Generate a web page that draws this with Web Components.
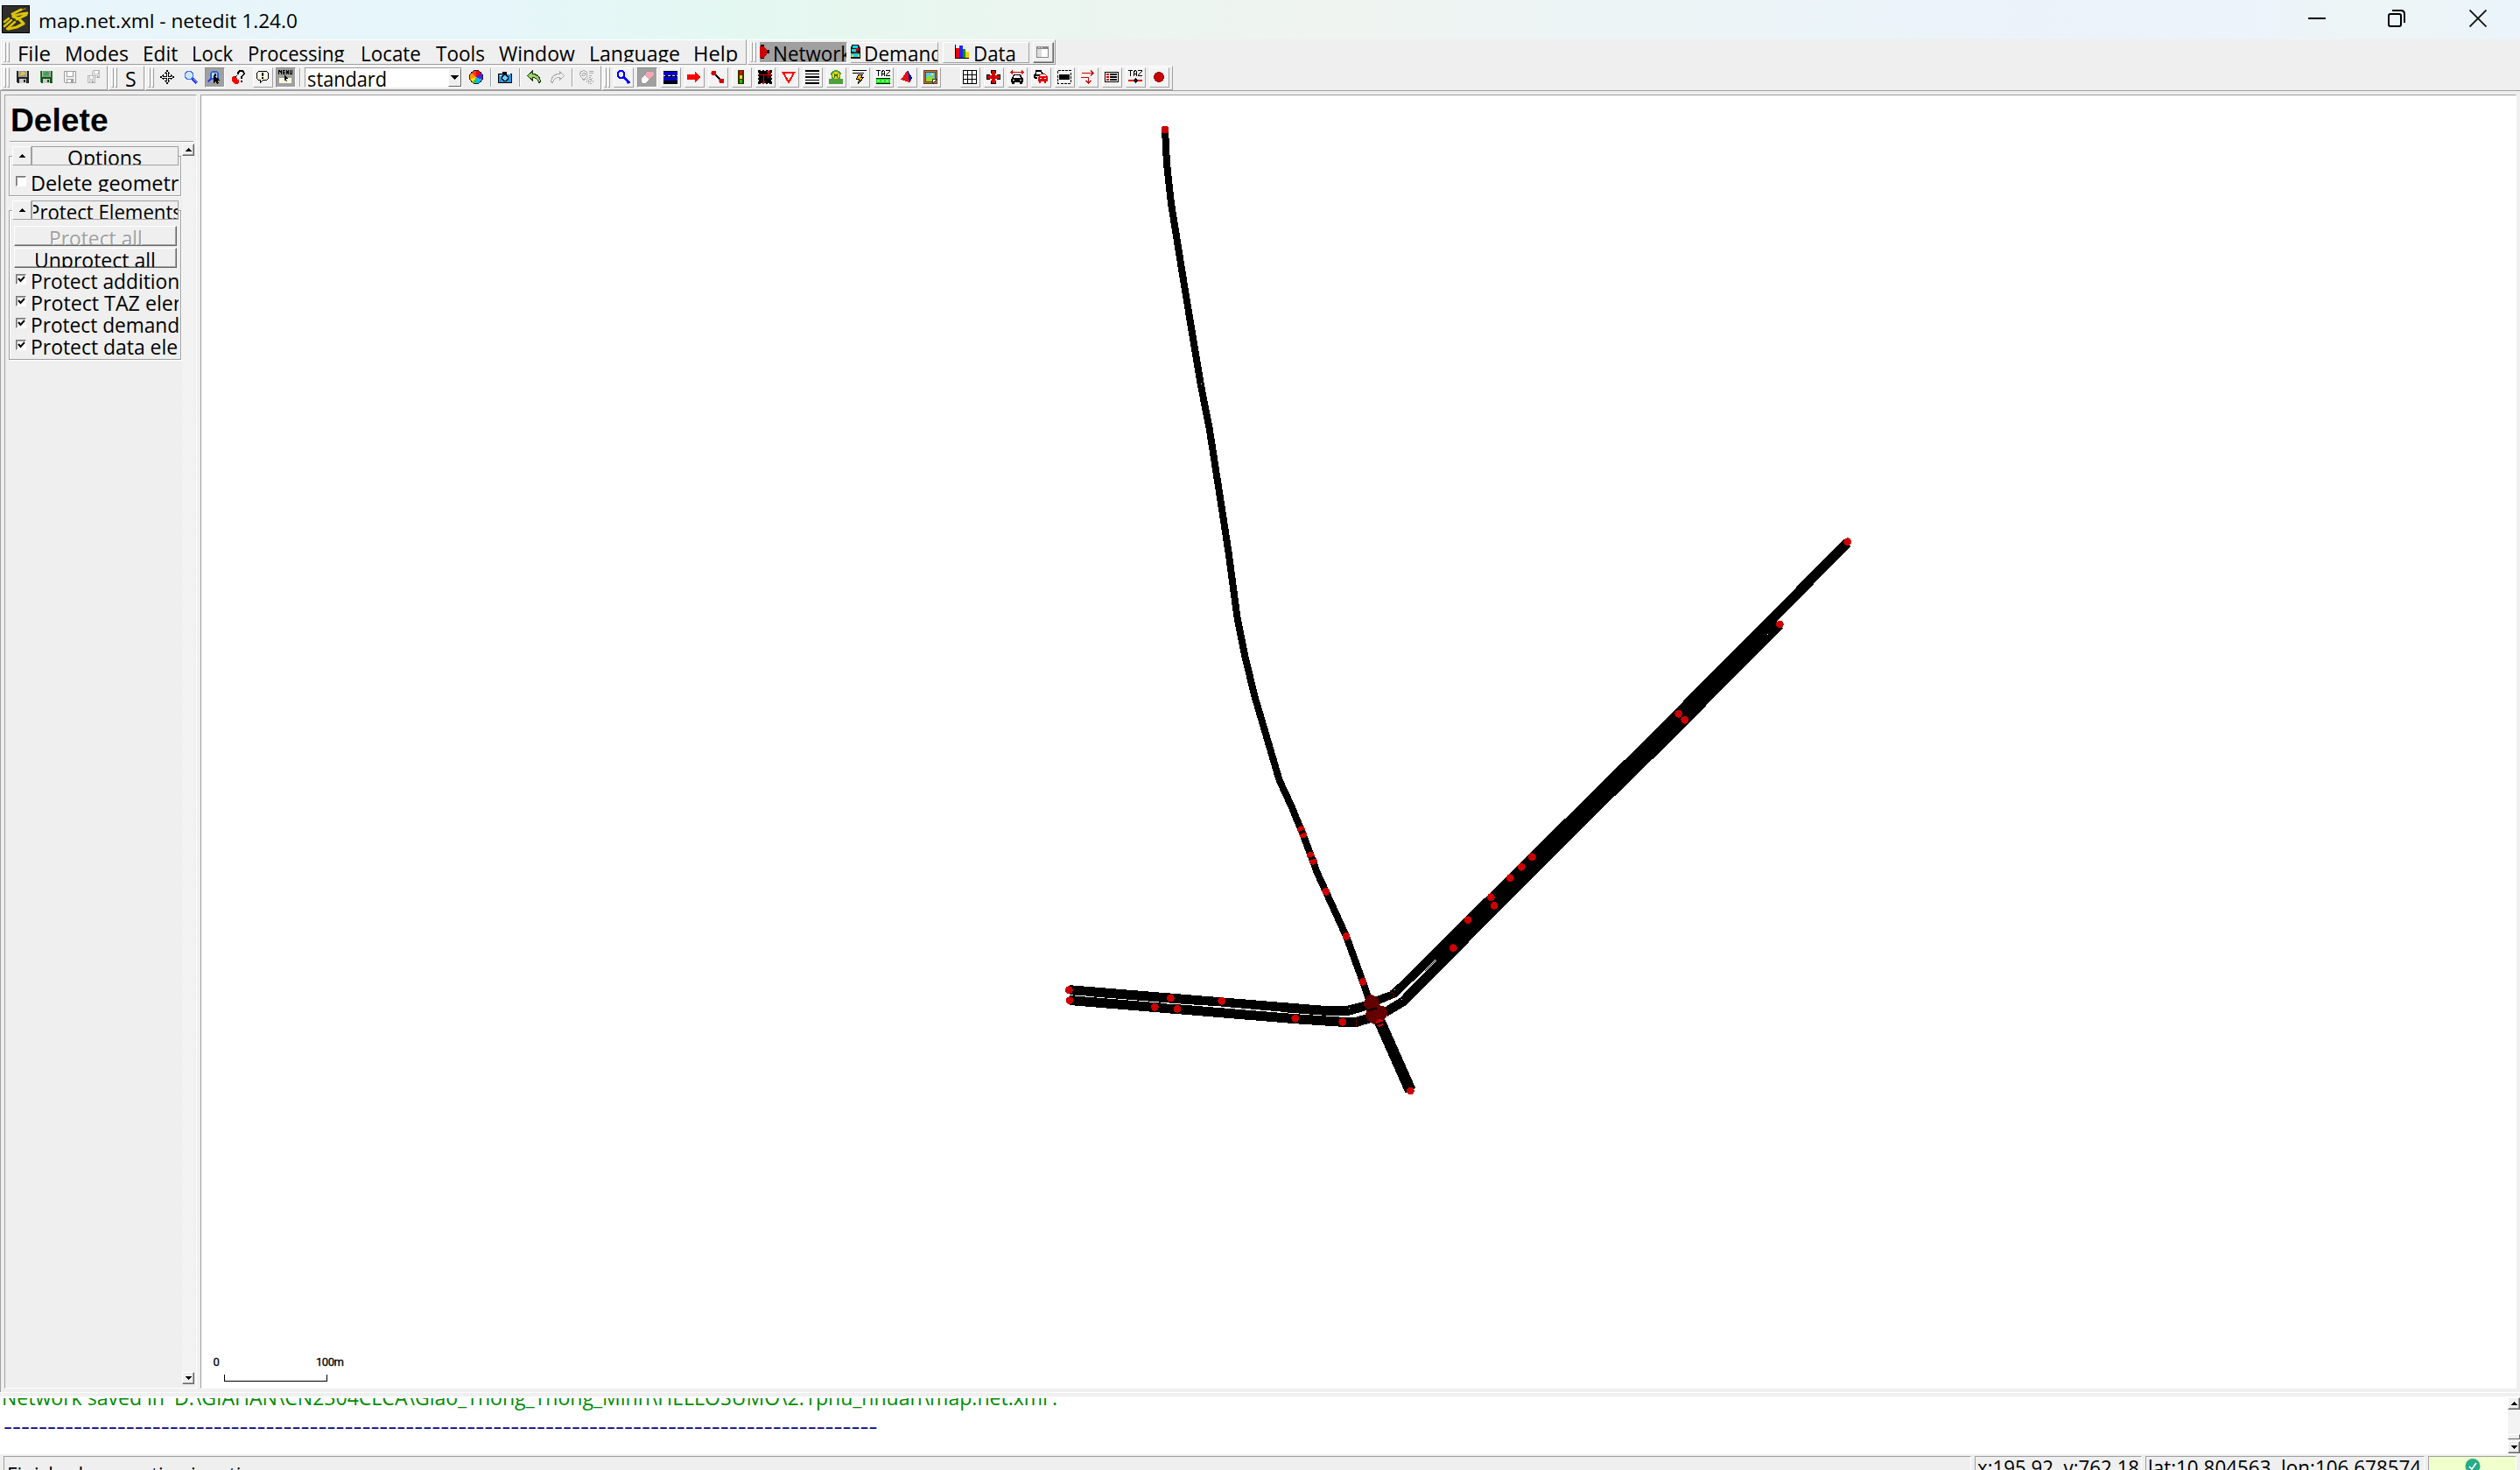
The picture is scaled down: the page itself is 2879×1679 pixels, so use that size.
<!DOCTYPE html>
<html lang="en">
<head>
<meta charset="utf-8">
<title>map.net.xml - netedit 1.24.0</title>
<style>
html,body{margin:0;padding:0;width:2879px;height:1679px;overflow:hidden;background:#efefef;font-family:"Open Sans","Noto Sans",sans-serif;color:#000}
</style>
</head>
<body>
<net-app></net-app>
<script>
const G='#a0a0a0';
const def=(name,css,html)=>customElements.define(name,class extends HTMLElement{
  connectedCallback(){
    if(this.shadowRoot)return;
    const r=this.attachShadow({mode:'open'});
    r.innerHTML='<style>*{box-sizing:border-box}'+css+'</style>'+(typeof html==='function'?html(this):html);
  }
});

/* Single-line label whose ink is fitted to a given width and clipped to its box. */
const pen=document.createElement('canvas').getContext('2d');
customElements.define('ui-text',class extends HTMLElement{
  connectedCallback(){
    if(this.shadowRoot)return;
    const n=(k,d)=>this.hasAttribute(k)?parseFloat(this.getAttribute(k)):d;
    const s=n('s',23),w=n('w',100),cw=n('cw',w+1),h=n('h',24),b=n('b',22),shift=n('dx',0);
    const fam=this.getAttribute('f')||'"Open Sans","Noto Sans",sans-serif',wt=this.getAttribute('wt')||'400';
    pen.font=wt+' '+s+'px '+fam;
    const m=pen.measureText(this.getAttribute('fit')||this.textContent);
    const k=w/(m.actualBoundingBoxLeft+m.actualBoundingBoxRight);
    const asc=m.fontBoundingBoxAscent,desc=m.fontBoundingBoxDescent;
    const dy=b-(20+(asc-desc)/2);
    const r=this.attachShadow({mode:'open'});
    r.innerHTML=`<style>:host{display:block;flex:none;overflow:hidden;width:${cw}px;height:${h}px}
      span{display:block;width:max-content;white-space:pre;font:${wt} ${s}px/40px ${fam.replace(/"/g,"'")};transform-origin:0 0;
      transform:translate(${(m.actualBoundingBoxLeft*k+shift).toFixed(2)}px,${Math.round(dy)}px) scaleX(${k.toFixed(4)})}</style><span><slot></slot></span>`;
  }
});
const T=(t,w,o={})=>'<ui-text w="'+w+'"'+Object.entries(o).map(([k,v])=>` ${k}='${v}'`).join('')+'>'+t+'</ui-text>';

/* 16x16 toolbar glyphs */
const floppy=(c,t,l)=>`<path fill="${c}" d="M1 1h14v14H2L1 14z"/><path fill="${t}" d="M4 1h8v7H4z"/><path fill="#bbb" d="M3 1h1v7H3zM12 1h1v7h-1z"/><path fill="${l}" d="M6 2h4v1h1v2H9v1H5V4h1z"/><path fill="#ccc" d="M4 10h8v5H4z"/><path fill="${c}" d="M9 11h2v3H9z"/>`;
const ghost=(x,y,s)=>`<g transform="translate(${x} ${y}) scale(${s})"><path fill="#efefef" stroke="#a0a0a0" d="M1.500 1.500h13v13h-12l-1-1z"/><path fill="#fff" stroke="#a0a0a0" d="M4.500 1.500h7v6h-7zM4.500 10.500h7v4h-7z"/><path fill="#a0a0a0" d="M9 11h2v3H9z"/></g>`;
const I={
save:floppy('#222','#999','#e5c531'),
saveg:floppy('#174d17','#7a9a8a','#2fae3c')+'<path fill="#2d8b2d" d="M1 1h1v13H1zM14 1h1v13h-1z"/>',
saved:ghost(0,0,1),
saveall:ghost(6,0,.62)+ghost(0,5,.68),
move:'<path fill="#fff" stroke="#000" d="M8 .5l2.500 3h-1.500v3.500h3.500v-1.500l3 2.500-3 2.500v-1.500h-3.500v3.500h1.500l-2.500 3-2.500-3h1.500v-3.500h-3.500v1.500l-3-2.500 3-2.500v1.500h3.500v-3.500h-1.500z"/>',
mag:'<circle cx="6" cy="6" r="4.500" fill="#cfe6fb" stroke="#3f74e8" stroke-width="1.500"/><path stroke="#2a3df0" stroke-width="3" d="M10 10l5 5"/><path stroke="#8fb4ff" d="M11 10l4 4"/>',
magp:'<circle cx="8" cy="6" r="4.500" fill="#b8cfe8" stroke="#2c63d8" stroke-width="2"/><path stroke="#2a3df0" stroke-width="2.500" d="M4.500 9.500l-4 4M11 9l2 2"/><path fill="#111" d="M8 4h2v3H8z"/><path d="M7 6v9l2.500-2 1.500 3 2-1-1.500-3H15z"/>',
what:'<path fill="none" stroke="#000" stroke-width="2" d="M8 5V3l2-2h3l1.500 2v2l-3 3v2"/><path d="M11 12h2v2h-2z"/><path fill="#f00" d="M2 7h3v2h2v2h2v3l-2 2H4l-3-3V9z"/><path d="M3 8l4-2-1 3z"/>',
bubble:'<path fill="#ffffe0" stroke="#000" d="M3.500 1.500h9l2 2v6l-2 2h-4l-3 3v-3h-2l-2-2v-6z"/><path d="M7 3h2v4H7zM7 8h2v2H7z"/>',
menu:'<path fill="#ffffe0" d="M1 9h14v6H1z"/><path d="M0 0h1l1 1 1-1h1v5H3V2L2 3 1 2v3H0zM5 0h3v1H6v1h2v1H6v1h2v1H5zM9 0h1l1 2V0h1v5h-1l-1-2v2H9zM13 0h1v4h1V0h1v5h-3z"/><path d="M7 6l4 4H9l1 3-1 0-1-2-1 1z"/>',
wheel:'<path fill="#ff0" d="M8 8L2 3 0 8z"/><path fill="#f33" d="M8 8L8 0 2 3z"/><path fill="#e00" d="M8 8V0l6 3z"/><path fill="#f90" d="M8 8L2 3 0 8l1 4z"/><path fill="#5b1be0" d="M8 8l6-5 2 5-1 4z"/><path fill="#ffe200" d="M8 8l-7 3 4 5z"/><path fill="#1fd01f" d="M8 8l-4 7 5 1z"/><path fill="#0bf" d="M8 8v8l4-1 3-4z"/><circle cx="8" cy="8" r="7.500" fill="none" stroke="#222"/>',
cam:'<path fill="#000" d="M0 4h5V2h5v2h6v11H0z"/><path fill="#2196e0" d="M1 5h14v9H1z"/><path fill="#fff" d="M10 3h4v2h-4zM2 6h2v1H2z"/><circle cx="8" cy="9" r="4" fill="#000"/><circle cx="8" cy="9" r="2.800" fill="#6fd0ff"/>',
undo:'<path fill="#9bd26a" stroke="#1c3a10" d="M.5 6.500L6 1.500v3c5 0 9 2 9.500 9l-2 1C13 10 10 8.500 6 8.500v3z"/>',
redo:'<path fill="#efefef" stroke="#aaa" d="M15.500 6.500L10 1.500v3C5 4.500 1 7 .5 13.500l2 1C3 10 6 8.500 10 8.500v3z"/>',
pin:'<g fill="none" stroke="#aaa"><path d="M5 .5l3 1.500 1 3-1 3-3 4-3-4-1.500-3 1-3z"/><circle cx="5" cy="5" r="1.500"/><path d="M11 1h5M11 3.500h5M11 6h3"/><circle cx="12" cy="12" r="3.500" stroke-dasharray="2 1"/><circle cx="12" cy="12" r="1.500"/></g>',
inspect:'<circle cx="5.500" cy="5" r="4" fill="none" stroke="#00f" stroke-width="2"/><path stroke="#00f" stroke-width="3" d="M8.500 8l6.500 7"/>',
eraser:'<path fill="#f2a7b5" d="M9 1h5l2 2v3l-5 5-6-5z"/><path fill="#fff" d="M5 6l6 5-4 4H3l-2-2v-3z"/><path fill="none" stroke="#999" d="M9 1h5l2 2v3l-9 9H3l-2-2v-3z"/>',
edge:'<path d="M0 1h16v15H0z"/><path fill="#0000cc" d="M0 2h16v4H0zM0 8h16v4H0z"/><path fill="#efefef" d="M0 6h2v1H0zM5 6h3v1H5zM10 6h3v1h-3zM15 6h1v1h-1z"/>',
arrow:'<path fill="#f00" d="M0 5h9V2l7 6-7 6v-3H0z"/>',
conn:'<path stroke="#000" stroke-width="2" d="M3 3l10 10"/><circle cx="3.500" cy="3.500" r="3" fill="#d00000"/><circle cx="12.500" cy="12.500" r="3" fill="#d00000"/>',
tl:'<path fill="#3a3000" d="M4 0h7v16H4z"/><circle cx="7.500" cy="3" r="2" fill="#f00"/><circle cx="7.500" cy="8" r="2" fill="#fd0"/><circle cx="7.500" cy="13" r="2" fill="#0c0"/>',
cross:'<path d="M0 0h3v1h2V0h2v1h2V0h2v1h2V0h3v3h-1v2h1v2h-1v2h1v2h-1v2h1v3h-3v-1h-2v1H9v-1H7v1H5v-1H3v1H0v-3h1v-2H0V9h1V7H0V5h1V3H0z"/><path fill="none" stroke="#d00" d="M6.500 15V6M1 5.500h14M12 3l3 2.500M4 13l2 2.500 2-2.500M11.500 9V1M10 3l1.500-2 2 2"/>',
yield:'<path fill="#fff" stroke="#f00" stroke-width="2" d="M1.500 2.500h13L8 14z"/>',
lines:'<path d="M0 0h16v2H0zM0 4h16v1H0zM0 7h16v2H0zM0 11h16v1H0zM0 14h16v2H0z"/>',
stop:'<path fill="#4ea03c" d="M0 10h3V7l-1-3 2-3 4-1 4 1 2 3-1 3v3h3v6H0z"/><circle cx="8" cy="6" r="4" fill="#f2d600"/><path fill="#2c7a2c" d="M6 4h1v1h2V4h1v5H9V7H7v2H6z"/>',
bolt:'<path d="M0 0h16v1H0zM0 3h13v1H0z"/><path fill="#fb0" stroke="#000" d="M6.500 5.500h5l-2 3h3l-6 7 1-5h-3z"/>',
taz:'<path fill="#fff" d="M0 0h16v9H0z"/><path d="M0 0h5v1H3v6H2V1H0zM6 7V2l1-2h2l1 2v5H9V5H7v2zM7 4h2V2L8 1 7 2zM11 0h5v1l-4 5h4v1h-5V6l4-5h-4z"/><path fill="#0e0" d="M0 9h16v6H0z"/><path fill="#000" d="M0 9h16v1H0zM0 15h16v1H0z"/><path fill="#fff" d="M1 12h3v1H1zM6 12h3v1H6zM11 12h3v1h-3z"/>',
poly:'<path fill="#e81010" d="M9 0l2 14-10-3z"/><path fill="#0000a8" d="M9 0l5 9-3 6z"/>',
pic:'<path fill="#6b3a1e" d="M0 0h16v16H0z"/><path fill="#b57a4a" d="M1 1h14v14H1z"/><path fill="#6b3a1e" d="M2 2h12v12H2z"/><path fill="#5bc8e8" d="M3 3h10v10H3z"/><path fill="#9bdc20" d="M3 10l3-4 3 3 2-2 2 3v3H3z"/><path fill="#ff0" d="M9 4h2v2H9z"/><path fill="#f4f0e0" stroke="#333" d="M10.500 10.500h5l-5 5z"/>',
grid:'<path fill="#fff" d="M0 0h16v16H0z"/><path fill="none" stroke="#000" d="M.5.5h15v15H.5zM5.500 0v16M10.500 0v16M0 5.500h16M0 10.500h16"/>',
plus:'<path d="M5 0h6v4H5zM5 12h6v4H5zM0 5h4v6H0zM12 5h4v6h-4z"/><path fill="#d00000" d="M6 1h4v5h5v4h-5v5H6v-5H1V6h5z"/>',
car:'<path stroke="#d00" fill="none" d="M1 2.500h14M3 .5l-2 2 2 2M13 .5l2 2-2 2"/><path d="M4 5h8l2 4 1 1v4h-1v2h-3v-2H5v2H2v-2H1v-4l1-1z"/><path fill="#fff" d="M5 6h6l1 3H4zM3 11h2v1H3zM11 11h2v1h-2z"/>',
cars:'<path fill="none" stroke="#000" stroke-width="1.500" d="M1 9V6l1-1 1-4h5l2 3M1 9h3"/><path d="M1 5h6v2H1z"/><path fill="#d00" d="M6 7l2-3h5l2 3 1 1v5h-2v2h-2v-2H8v2H6v-2H5V8z"/><path fill="#fff" d="M8 5h5l1 2H7zM7 9h2v1H7zM12 9h2v1h-2z"/>',
sel:'<path fill="none" stroke="#000" stroke-dasharray="3 1.330" d="M.5.5h15v15H.5z"/><path d="M2 5h12v6H2z"/>',
routes:'<path stroke="#c00" fill="none" d="M1 3.500h13M11 .5l3 3-3 3M0 8.500h8.500v6M5.500 12l3 3 3-3"/>',
list:'<rect x=".5" y="2.500" width="15" height="11" rx="1" fill="#fff" stroke="#000"/><path d="M6 4h8v2H6zM6 7h8v2H6zM6 10h8v2H6z"/><path fill="#c00" d="M2 4h3v2H2zM2 7h3v2H2zM2 10h3v2H2z"/>',
tazrel:'<path d="M0 0h5v1H3v6H2V1H0zM6 7V2l1-2h2l1 2v5H9V5H7v2zM7 4h2V2L8 1 7 2zM11 0h5v1l-4 5h4v1h-5V6l4-5h-4z"/><path fill="#e00" d="M0 11h16v2H0z"/><path d="M8 9l3 3-3 3-3-3z"/>',
dot:'<circle cx="8" cy="8" r="5.500" fill="#c80000" stroke="#900" />'
};
def('net-icon',':host{display:block;flex:none;width:16px;height:16px}svg{display:block}',
  e=>`<svg width="16" height="16" viewBox="0 0 16 16" shape-rendering="crispEdges" fill="#000">${I[e.getAttribute('n')]}</svg>`);
def('tool-button',`:host{display:block;flex:none;width:23px;height:23px;padding:2px;box-sizing:border-box;border:1px solid;border-color:#fff ${G} ${G} #fff;background:#f3f3f3}
  :host([on]){background:${G};border-color:#8f8f8f #fff #fff #8f8f8f}`,e=>`<net-icon n="${e.getAttribute('n')}"></net-icon>`);
def('tool-sep',`:host{display:block;flex:none;width:2px;height:21px;margin-top:1px;background:linear-gradient(90deg,${G} 1px,#fff 1px)}`,'');
def('bar-grip',`:host{display:flex;flex:none;gap:1px;width:7px;height:23px}i{width:3px;border:1px solid;border-color:#fff ${G} ${G} #fff}`,'<i></i><i></i>');
def('dock-bar',`:host{display:flex;flex:none;align-items:flex-start;box-sizing:border-box;border:1px solid;border-color:#fff ${G} ${G} #fff}`,'<slot></slot>');

/* Lays out [left, width, markup] entries as flex items separated by margins. */
const flow=(start,items)=>{let c=start;return items.map(([x,w,h])=>{const m=x-c;c=x+w;return `<div style="flex:none;width:${w}px;margin-left:${m.toFixed(1)}px">${h}</div>`}).join('')};
const ic=n=>`<div style="padding-top:3px"><net-icon n="${n}"></net-icon></div>`;
const bt=(n,on)=>`<tool-button n="${n}"${on?' on':''}></tool-button>`;

def('title-bar',`:host{display:flex;height:45px;align-items:flex-start;background:linear-gradient(90deg,#e9f5fb 0,#e6f6fa 560px,#e4f8f1 860px,#eaf6ef 1150px,#eff4f0 1500px,#ebf4f9 2100px,#ecf3fb 2560px,#eef5f6 2700px,#eaf4fa 2879px)}
 .logo{margin:6px 0 0 2px;width:32px;height:32px}.sp{flex:1}svg{display:block}.w{margin-top:11px}`,
 `<svg class="logo" viewBox="0 0 32 32"><path fill="#000" d="M0 0h32v32H0z"/><path fill="#2e2e2c" d="M1 1h30v30H1z"/><g fill="none" stroke="#dcc400" stroke-linecap="round" stroke-linejoin="round"><path stroke-width="2.500" d="M3 19l5-4M3 24l8-7M6 27l9-8"/><path stroke-width="3.200" d="M8 27l9-2 8-4-6-6-6-2"/><path stroke-width="2.800" d="M13 12l9-2 7-1M17 16l11-5M12 10l10-5"/><path stroke-width="1.400" d="M20 6l7-2" opacity=".6"/></g></svg>
 <div style="margin-left:11px;padding-top:9px">${T('map.net.xml - netedit 1.24.0',294,{s:22.5,h:34,b:23})}</div><div class="sp"></div>
 <svg class="w" style="margin-right:71px" width="20" height="20"><path d="M0 9h20v2H0z"/></svg>
 <svg class="w" style="margin-right:73px" width="20" height="20" fill="none" stroke="#000" stroke-width="2"><rect x="1" y="5" width="14" height="14" rx="2"/><path d="M5 1h10q4 0 4 4v10"/></svg>
 <svg class="w" style="margin-right:38px" width="20" height="20" stroke="#111" stroke-width="1.800"><path d="M.5.5l19 19M19.500.5l-19 19"/></svg>`);

const menus=[['File',22,35],['Modes',76,70],['Edit',165,38],['Lock',221,45],['Processing',285,109],['Locate',414,66],['Tools',498,55],['Window',570,87],['Language',675,101],['Help',794,48]];
def('menu-row',`:host{display:flex;height:30px;padding-left:1px;gap:1px;box-sizing:border-box;background:#efefef}
 dock-bar{height:29px;padding-top:2px}
 .tab{display:flex;height:24px;border:1px solid;border-color:#fff ${G} ${G} #fff;overflow:hidden}.tab.on{background:${G};border-color:#999 #fff #fff #999}`,
 `<dock-bar style="width:852px">${flow(2,[[4,7,'<bar-grip></bar-grip>'],...menus.map(([t,x,w])=>[x,w+1,T(t,w,{h:23,b:22})])])}</dock-bar>
 <dock-bar style="width:352px">${flow(855,[[857,7,'<bar-grip></bar-grip>'],
  [868,100,`<div class="tab on" style="border-left:0"><svg width="11" height="16" style="margin-top:2px" shape-rendering="crispEdges"><path d="M1 0h4v16H1zM7 6h4v4H7z"/><path fill="#d00000" d="M0 2h4l4 4v5l-4 4H0z"/></svg><div style="margin-left:6px">${T('Network',87,{h:22,b:21,cw:82})}</div></div>`],
  [972,100,`<div class="tab" style="border-left:0"><svg width="11" height="16" style="margin-top:2px" shape-rendering="crispEdges"><path fill="#111" d="M1 0h8l2 4v12H0V4z"/><path fill="#00d8e8" d="M2 1h6v3H2zM1 5h5v3H1zM0 10h10v4H0z"/><path fill="#d00" d="M3 8h5v1H3zM6 4h3v3H6z"/><path fill="#ffe000" d="M1 12h2v2H1zM8 12h2v2H8z"/></svg><div style="margin-left:6px">${T('Demand',87,{h:22,b:21,cw:82})}</div></div>`],
  [1077,99,`<div class="tab"><svg width="16" height="16" style="margin:2px 0 0 13px" shape-rendering="crispEdges"><path d="M0 0h1v15h15v1H0z"/><path fill="#e00" d="M1 4h4v11H1z"/><path fill="#22f" d="M5 1h4v14H5z"/><path fill="#090" d="M9 5h3v10H9z"/><path fill="#fc0" d="M12 8h4v7h-4z"/></svg><div style="margin-left:7px">${T('Data',45,{h:22,b:21})}</div></div>`],
  [1180,24,`<div class="tab" style="border-color:#fff #666 #666 #fff;box-shadow:inset -1px -1px ${G}"><svg width="14" height="13" style="margin:4px 0 0 3px" shape-rendering="crispEdges"><path fill="#888" d="M0 0h14v13H0z"/><path fill="#ddd" d="M1 3h5v9H1zM2 1h2v1H2zM5 1h2v1H5z"/><path fill="#fff" d="M6 3h7v9H6z"/></svg></div>`]])}</dock-bar>`);

const modes=['inspect','eraser','edge','arrow','conn','tl','cross','yield','lines','stop','bolt','taz','poly','pic'];
const procs=['grid','plus','car','cars','sel','routes','list','tazrel','dot'];
def('tool-row',`:host{display:flex;height:29px;padding-left:1px;gap:1px;box-sizing:border-box;background:#efefef;border-bottom:1px solid ${G}}
 dock-bar{height:28px;padding-top:1px}
 .combo{display:flex;width:180px;height:23px;background:#fff;border:1px solid;border-color:${G} #fff #fff ${G}}
 .dd{width:15px;height:21px;background:#efefef;border:1px solid;border-color:#fff #666 #666 #fff;display:flex;align-items:center;justify-content:center}`,
 `<dock-bar style="width:122px">${flow(2,[[4,7,'<bar-grip></bar-grip>'],[18,16,ic('save')],[45,16,ic('saveg')],[72,16,ic('saved')],[99,17,ic('saveall')]])}</dock-bar>
 <dock-bar style="width:41px">${flow(125,[[127,7,'<bar-grip></bar-grip>'],[144,12,T('S',11,{h:24,b:22})]])}</dock-bar>
 <dock-bar style="width:521px">${flow(167,[[169,7,'<bar-grip></bar-grip>'],[183,16,ic('move')],[210,16,ic('mag')],[234,23,bt('magp',1)],[264,16,ic('what')],[289,23,bt('bubble')],[315,23,bt('menu',1)],[342,2,'<tool-sep></tool-sep>'],
 [348,180,`<div class="combo"><div style="margin-left:3px">${T('standard',89,{h:21,b:21})}</div><div style="flex:1"></div><div class="dd"><svg width="9" height="5" shape-rendering="crispEdges"><path d="M0 0h9L4.500 5z"/></svg></div></div>`],
 [536,16,ic('wheel')],[560,2,'<tool-sep></tool-sep>'],[569,16,ic('cam')],[593,2,'<tool-sep></tool-sep>'],[602,16,ic('undo')],[629,16,ic('redo')],[653,2,'<tool-sep></tool-sep>'],[662,16,ic('pin')]])}</dock-bar>
 <dock-bar style="width:652px">${flow(689,[[690,7,'<bar-grip></bar-grip>'],...modes.map((n,i)=>[701+27*i,23,bt(n,i==1)]),...procs.map((n,i)=>[1097+27*i,23,bt(n)])])}</dock-bar>`);

def('scroll-strip',`:host{display:flex;flex-direction:column;flex:none;width:14px;box-sizing:border-box}
 .b{flex:none;height:14px;background:#efefef;border:1px solid;border-color:#fff #666 #666 #fff;box-shadow:inset -1px -1px ${G};display:flex;align-items:center;justify-content:center}
 .t{flex:1;background:repeating-conic-gradient(#fff 0 25%,#e6e6e6 0 50%) 0 0/2px 2px;display:flex;flex-direction:column;justify-content:flex-end}
 .th{height:6px;margin-bottom:2px;background:#efefef;border:1px solid;border-color:#fff #666 #666 #fff}`,
 e=>`<div class="b"><svg width="7" height="4" shape-rendering="crispEdges"><path d="M0 4L3.500 0 7 4z"/></svg></div><div class="t">${e.hasAttribute('thumb')?'<div class="th"></div>':''}</div><div class="b"><svg width="7" height="4" shape-rendering="crispEdges"><path d="M0 0h7L3.500 4z"/></svg></div>`);

/* Collapsible group: groove frame with its header overlapping the top line. */
def('group-box',`:host{display:block;position:relative;width:197px;box-sizing:border-box}
 .fr{position:absolute;inset:11px 0 0 0;border:1px solid ${G};box-shadow:1px 1px #fff,inset 1px 1px #fff}
 .hd{position:relative;display:flex;margin-left:4px;width:190px;height:22px;background:#efefef}
 .a{width:22px;border:1px solid;border-color:#fff ${G} ${G} #fff;display:flex;align-items:center;justify-content:center}
 .l{flex:1;border:1px solid ${G};display:flex;overflow:hidden}.bd{position:relative}`,
 `<div class="fr"></div><div class="hd"><div class="a"><svg width="8" height="4" shape-rendering="crispEdges"><path d="M0 4l4-4 4 4z"/></svg></div><div class="l"><slot name="head"></slot></div></div><div class="bd"><slot></slot></div>`);
def('check-row',`:host{display:flex;height:25px;padding-left:8px;box-sizing:border-box}
 .c{flex:none;width:12px;height:12px;margin:3px 7px 0 0;background:#fff;border:1px solid;border-color:#777 #fff #fff #777;box-shadow:inset 1px 1px ${G}}svg{display:block}`,
 e=>`<div class="c">${e.hasAttribute('on')?'<svg width="10" height="10" fill="none" stroke="#000" stroke-width="2"><path d="M2 4l2.500 3L9 2"/></svg>':''}</div><slot></slot>`);
def('push-btn',`:host{display:flex;width:186px;height:23px;margin-left:6px;box-sizing:border-box;border:1px solid;border-color:#fff #666 #666 #fff;box-shadow:inset -1px -1px ${G};overflow:hidden}
 :host([off]){color:${G};text-shadow:1px 1px #fff}`,'<slot></slot>');
def('side-panel',`:host{display:block;flex:none;width:220px;height:1478px;box-sizing:border-box;border:1px solid;border-color:${G} #fff #fff ${G}}
 .h{height:53px;margin:0 3px 0 5px;border-bottom:1px solid ${G};box-shadow:0 1px #fff;padding:8px 0 0 3px}
 .b{display:flex;height:1418px;margin-top:2px;padding-left:4px}.c{width:198px}`,
 `<div class="h">${T('Delete',109,{s:37,f:'"Liberation Sans",sans-serif',wt:700,h:40,b:33})}</div>
 <div class="b"><div class="c">
 <group-box style="height:57px;margin-top:3px"><div slot="head" style="margin-left:41px">${T('Options',83,{h:20,b:21})}</div>
  <check-row style="margin-top:9px">${T('Delete geometr',168,{h:21,b:20})}</check-row></group-box>
 <group-box style="height:182px;margin-top:5px"><div slot="head" style="margin-left:1px">${T('Protect Elements',173,{h:20,b:21,cw:165,dx:-4})}</div>
  <push-btn off style="margin-top:7px"><div style="margin-left:41px">${T('Protect all',103,{h:21,b:22})}</div></push-btn>
  <push-btn style="margin-top:2px"><div style="margin-left:24px">${T('Unprotect all',135,{h:21,b:22})}</div></push-btn>
  <check-row on style="margin-top:4px">${T('Protect addition',167,{h:25,b:20,cw:167})}</check-row>
  <check-row on>${T('Protect TAZ elem',181,{h:25,b:20,cw:167})}</check-row>
  <check-row on>${T('Protect demand',167,{h:25,b:20,cw:167})}</check-row>
  <check-row on style="height:24px">${T('Protect data elem',186,{h:24,b:20,cw:167})}</check-row></group-box>
 </div><scroll-strip style="height:1417px"></scroll-strip></div>`);

/* Road network in window coordinates; the viewBox starts at the canvas corner. */
const z8=(x,y)=>[1200+x/3,1080+y/3],z9=(x,y)=>[1440+x/3,920+y/3],z10=(x,y)=>[1860+x/3,590+y/3];
const P=a=>a.map(p=>p.map(v=>v.toFixed(1)).join(',')).join(' ');
const nodes=[[64,152],[66,188],[412,180],[587,190],[358,211],[435,217],[839,250],[1001,262],[1234,498],[1129,265]].map(p=>z8(...p))
 .concat([[140,83],[146,98],[172,171],[181,190],[224,295],[294,448],[351,604],[661,488],[711,392],[801,343],[790,314],[856,248],[895,211],[931,176]].map(p=>z9(...p)))
 .concat([[752,86],[520,369],[173,676],[194,697]].map(p=>z10(...p))).concat([[1331,148]]);
const seams=[[85,172,123,173],[133,176,146,176],[158,179,182,180],[195,181,220,183],[232,184,258,185],[270,187,295,188],[306,190,330,190],[343,192,370,194],[380,197,420,199],[430,200,585,210],[585,210,800,229],[820,233,845,233],[865,236,880,236],[909,238,912,238],[957,241,1025,241]];
const road=(pts,w)=>`<polyline fill="none" stroke="#000" stroke-width="${w}" stroke-linejoin="round" points="${P(pts)}"/>`;
def('net-canvas',`:host{display:block;width:2646px;height:1478px;box-sizing:border-box;border:1px solid;border-color:${G} #fff #fff ${G};background:#fff}svg{display:block}`,
 `<svg width="2644" height="1476" viewBox="230 109 2644 1476" shape-rendering="crispEdges">
 ${road([[1331,148],[1333,187],[1338,232.5],[1353,326],[1371.7,438.7],[1381.7,489.6],[1395,575],[1404,634],[1413.3,704],[1421.7,746.7],[1433.3,795],[1461.7,891.4],[1475,920],[1487.7,950.7],[1499,980.7],[1504.5,996],[1514.7,1018.3],[1538,1069.3],[1557,1121.3],[1564,1142]],8)}
 ${road([[1222,1130.7],z8(925,222),z8(1020,223),z8(1100,202)],11)}
 ${road([[1222,1142.5],z8(839,251),z8(1001,262),z8(1050,262),z8(1100,247)],11)}
 ${road([[1570,1145],[1592,1137],[1773.3,957.5],[1882.4,850],[2045.7,685.500],[2110.5,620]],11.4)}
 ${road([[1582,1156],[1603,1143.5],[1800,945],[1897.6,849.7],[2033,713.3]],11.4)}
 ${road([[1640,1097],[1700,1037],[1786,951.3],[1890,849.8],[2026,713]],10)}
 ${road([[1576,1166],[1611.3,1245.5]],13)}
 <g stroke="#fff" stroke-width="1">${seams.map(([a,b,c,d])=>{const p=z8(a,b),q=z8(c,d);return `<path d="M${p}L${q}"/>`}).join('')}</g>
 <polygon fill="#fff" points="${P([[957,241],[1030,239],[1085,221],[1085,236],[1030,243]].map(p=>z8(...p)))}"/>
 <polygon fill="#fff" points="${P([[405,682],[468,655],[600,528],[478,660],[428,690],[412,692]].map(p=>z9(...p)))}"/>
 <g stroke="#640000" stroke-width="1"><path d="M${z8(1165,152)}L${z8(1182,180)}M${z8(1048,250)}L${z8(1050,278)}"/></g>
 <polygon fill="#640000" points="${P([[1085,172],[1100,167],[1122,178],[1130,205],[1148,210],[1157,235],[1140,262],[1115,272],[1088,258],[1080,235],[1085,218],[1072,203]].map(p=>z8(...p)))}"/>
 <g fill="#c00">${nodes.map(([x,y])=>`<circle cx="${x.toFixed(1)}" cy="${y.toFixed(1)}" r="4.400"/>`).join('')}</g>
 <g stroke="#000" stroke-width="2.200"><path d="M${z8(1088,223)}L${z8(1118,214)}M${z8(1113,272)}L${z8(1142,262)}"/><path stroke-width="3" d="M${z9(133,94)}L${z9(154,87)}M${z9(165,183)}L${z9(187,178)}"/></g>
 <path fill="#fff" d="M1541 1151h1v1h-1zM1593 1130h1v1h-1zM1601 1141h1v1h-1zM2019 724h1v1h-1zM1372 438h1v1h-1z"/>
 <path fill="none" stroke="#000" d="M256.500 1570v7.500h117V1570"/>
 <g font-family="Roboto,'Open Sans',sans-serif" font-size="13" fill="#000" stroke="#000" stroke-width=".3"><text x="243.500" y="1560" textLength="7">0</text><text x="361" y="1560" textLength="32">100m</text></g>
 </svg>`);

def('message-log',`:host{display:flex;height:66px;background:#fff}.t{flex:1;padding:2px 0 0 4px}`,
 `<div class="t"><div style="color:#008b00">${T("Network saved in 'D:\\GIAHAN\\CN2304CLCA\\Giao_Thong_Thong_Minh\\HELLOSUMO\\2.1phu_nhuan\\map.net.xml'.",1203,{h:16,b:8})}</div>
 <div style="color:#00008b">${T('-'.repeat(100),998,{h:26,b:25})}</div></div><scroll-strip thumb style="margin-top:1px;height:64px"></scroll-strip>`);
def('status-bar',`:host{display:flex;height:18px;padding:2px 4px 0 4px;gap:4px;box-sizing:border-box;overflow:hidden}
 .p{height:24px;border:1px solid;border-color:${G} #fff #fff ${G};flex:none}`,
 `<div class="p" style="flex:1;padding:6px 0 0 5px">${T('Finished computing junctions.',308,{h:9,b:23})}</div>
 <div class="p" style="width:191px;padding-left:2px">${T('x:195.92, y:762.18',184,{h:15,b:21})}</div>
 <div class="p" style="width:319px;padding-left:3px">${T('lat:10.804563, lon:106.678574',311,{h:15,b:21})}</div>
 <div class="p" style="width:101px;background:#f0ffcc"><svg width="18" height="18" style="display:block;margin:2px 0 0 41px"><circle cx="9" cy="8.500" r="8.500" fill="#26ad88"/><path d="M5 9l3 3 5-7" fill="none" stroke="#fff" stroke-width="1.600"/></svg></div>`);
def('net-app',`:host{display:flex;flex-direction:column;width:2879px;height:1679px;background:#efefef}
 .m{display:flex;height:1486px;box-sizing:border-box;border-left:1px solid ${G};padding:4px 0 0 4px;gap:4px}.s{height:5px;border-top:1px solid #fff}`,
 `<title-bar></title-bar><menu-row></menu-row><tool-row></tool-row><div class="m"><side-panel></side-panel><net-canvas></net-canvas></div><div class="s"></div><message-log></message-log><status-bar></status-bar>`);
</script>
</body>
</html>
